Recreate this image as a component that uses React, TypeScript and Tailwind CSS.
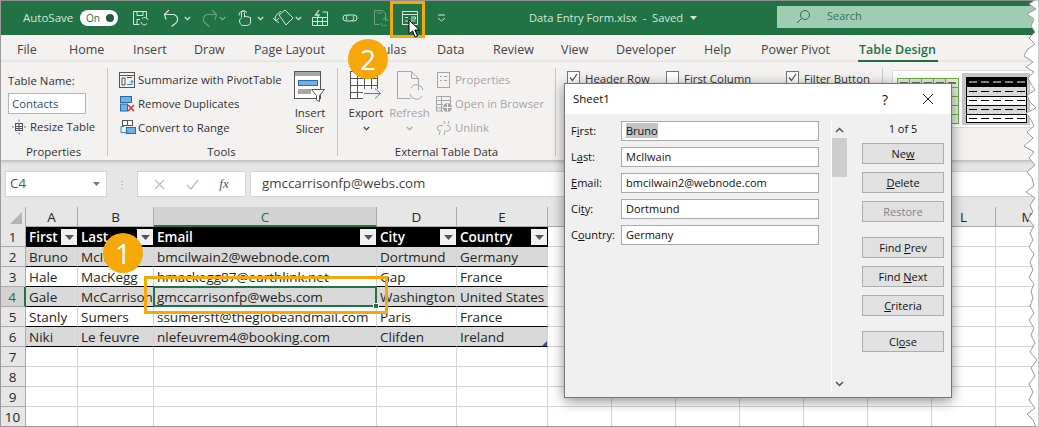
import React from 'react';

const font = { fontFamily: '"Open Sans", "Noto Sans", sans-serif' };

const tabs: [string, number][] = [
  ['File', 69], ['Home', 64], ['Insert', 61], ['Draw', 60], ['Page Layout', 98], ['Formulas', 85],
  ['Data', 56], ['Review', 68], ['View', 55], ['Developer', 88], ['Help', 57], ['Power Pivot', 98],
];

const columns = [
  { name: 'A', width: 52 },
  { name: 'B', width: 76 },
  { name: 'C', width: 223 },
  { name: 'D', width: 80 },
  { name: 'E', width: 91 },
  { name: 'F', width: 64 },
  { name: 'G', width: 64 },
  { name: 'H', width: 64 },
  { name: 'I', width: 64 },
  { name: 'J', width: 64 },
  { name: 'K', width: 64 },
  { name: 'L', width: 64 },
  { name: 'M', width: 64 },
];

const tableRows = [
  ['First', 'Last', 'Email', 'City', 'Country'],
  ['Bruno', 'McIlwain', 'bmcilwain2@webnode.com', 'Dortmund', 'Germany'],
  ['Hale', 'MacKegg', 'hmackegg87@earthlink.net', 'Gap', 'France'],
  ['Gale', 'McCarrison', 'gmccarrisonfp@webs.com', 'Washington', 'United States'],
  ['Stanly', 'Sumers', 'ssumersft@theglobeandmail.com', 'Paris', 'France'],
  ['Niki', 'Le feuvre', 'nlefeuvrem4@booking.com', 'Clifden', 'Ireland'],
];

const fields = [
  { pre: 'F', key: 'i', post: 'rst:', value: 'Bruno' },
  { pre: 'L', key: 'a', post: 'st:', value: 'McIlwain' },
  { pre: '', key: 'E', post: 'mail:', value: 'bmcilwain2@webnode.com' },
  { pre: 'Ci', key: 't', post: 'y:', value: 'Dortmund' },
  { pre: 'C', key: 'o', post: 'untry:', value: 'Germany' },
];

// hand-picked tear along the right edge of the screenshot
const tearPoints = [
  [14, 0], [8, 4], [15, 9], [6, 14], [13, 19], [10, 26], [14, 32], [8, 38], [14, 44], [6, 50], [3, 56], [12, 62],
  [5, 67], [13, 72], [7, 78], [10, 84], [14, 90], [6, 95], [9, 102], [15, 108], [5, 113], [10, 120], [13, 126],
  [6, 132], [12, 138], [3, 146], [13, 152], [8, 158], [14, 165], [6, 172], [11, 178], [13, 186], [5, 192], [14, 198],
  [9, 205], [12, 212], [7, 219], [13, 226], [9, 233], [12, 240], [8, 247], [13, 254], [9, 262], [12, 270], [8, 277],
  [13, 284], [10, 291], [12, 298], [9, 306], [13, 313], [8, 320], [13, 328], [10, 335], [14, 343], [9, 352], [16, 360],
  [10, 368], [14, 376], [8, 384], [12, 392], [8, 400], [14, 408], [6, 414], [12, 420], [15, 427],
];

function Chevron({ className = '', color = '#fff' }: { className?: string; color?: string }) {
  return (
    <svg width="7" height="5" viewBox="0 0 7 5" fill="none" className={className}>
      <path d="M.8 1 3.5 3.7 6.2 1" stroke={color} strokeWidth="1.1" />
    </svg>
  );
}

function QatIcon({ children, className = '' }: { children: React.ReactNode; className?: string }) {
  return (
    <svg width="18" height="18" viewBox="0 0 18 18" fill="none" stroke="#d6e6dc" strokeWidth="1" className={`shrink-0 ${className}`}>
      {children}
    </svg>
  );
}

function FilterButton({ className = '' }: { className?: string }) {
  return (
    <span className={`w-4 h-4 bg-[#f0f0f0] flex items-center justify-center shrink-0 ${className}`}>
      <svg width="9" height="5" viewBox="0 0 9 5"><path d="M0 0h9L4.5 5z" fill="#555" /></svg>
    </span>
  );
}

function SmallAction({ icon, label, muted }: { icon: React.ReactNode; label: string; muted?: boolean }) {
  return (
    <div className={`h-6 flex items-center gap-[2px] whitespace-nowrap ${muted ? 'text-[#a6a6a6]' : 'text-[#333]'}`}>
      <span className="w-[18px] flex justify-center">{icon}</span>
      <span>{label}</span>
    </div>
  );
}

function CheckOption({ label, checked, width }: { label: string; checked?: boolean; width: number }) {
  return (
    <div className="flex items-start gap-[5px] h-[16px]" style={{ width }}>
      <span className="w-[13px] h-[13px] mt-[3px] border border-[#777] bg-white flex items-center justify-center shrink-0">
        {checked && (
          <svg width="11" height="11" viewBox="0 0 11 11" fill="none"><path d="m2 5.500 2.500 3L9 2" stroke="#555" strokeWidth="1.200" /></svg>
        )}
      </span>
      <span className="leading-[16px] pt-[3px] whitespace-nowrap">{label}</span>
    </div>
  );
}

function Ribbon() {
  return (
    <div className="h-[98px] flex text-[11.4px] text-[#333] bg-[#f3f2f1] shadow-[0_1px_4px_rgba(0,0,0,0.25)] relative">
      {/* Properties */}
      <div className="w-[108px] shrink-0 pl-2 pt-[3px] flex flex-col border-r border-[#c6c6c6] my-[6px] h-[88px]">
        <div className="h-[20px] leading-[20px]">Table Name:</div>
        <div className="w-[78px] h-[21px] mt-[2px] border border-[#b5b5b5] bg-white pl-[3px] leading-[19px] text-[#1f4e79]">Contacts</div>
        <div className="h-6 mt-[1px] flex items-center gap-[3px] pl-[3px]">
          <svg width="16" height="18" viewBox="0 0 16 18" fill="none" stroke="#555">
            <rect x="4.5" y="5.5" width="7" height="7" />
            <path d="M4.5 8.5h7M4.5 10.5h7M8 5.5v7" />
            <path d="M8 1.5v2M8 14.500v2M1 9h2M13 9h2" stroke="#2b88d8" />
          </svg>
          <span>Resize Table</span>
        </div>
        <div className="mt-auto mb-[-4px] pr-[8px] text-center leading-[16px]">Properties</div>
      </div>

      {/* Tools */}
      <div className="w-[230px] shrink-0 my-[6px] h-[88px] border-r border-[#c6c6c6] flex flex-col">
        <div className="flex flex-1">
          <div className="pl-[10px] w-[185px] shrink-0">
            <SmallAction
              label="Summarize with PivotTable"
              icon={
                <svg width="16" height="16" viewBox="0 0 16 16" fill="none" stroke="#555">
                  <rect x=".5" y=".5" width="15" height="15" />
                  <path d="M1 3.500h14" />
                  <path d="M3 6h3v7H3zM8 5.500h5" />
                  <path d="M8 12.500h5v-4M11 10.500l2-2 2 2" stroke="#2b88d8" />
                </svg>
              }
            />
            <SmallAction
              label="Remove Duplicates"
              icon={
                <svg width="16" height="16" viewBox="0 0 16 16" fill="none">
                  <rect x="1.500" y=".5" width="11" height="6" fill="#6fb1e6" stroke="#2b6ca8" />
                  <rect x="1.500" y="8" width="7" height="7" fill="#6fb1e6" stroke="#2b6ca8" />
                  <path d="m9 9 6 6M15 9l-6 6" stroke="#d13438" strokeWidth="1.500" />
                </svg>
              }
            />
            <SmallAction
              label="Convert to Range"
              icon={
                <svg width="17" height="16" viewBox="0 0 17 16" fill="none">
                  <rect x="3.500" y=".5" width="5" height="5" fill="#fff" stroke="#555" />
                  <rect x="8.500" y=".5" width="5" height="5" fill="#fff" stroke="#555" />
                  <rect x="7.500" y="7.500" width="9" height="6" fill="#6fb1e6" stroke="#2b6ca8" />
                  <path d="M5 6.500H2v6h7M7 10.500l2 2-2 2" stroke="#2b88d8" />
                </svg>
              }
            />
          </div>
          <div className="flex flex-col items-center w-[34px] leading-[16px]">
            <svg width="32" height="32" viewBox="0 0 32 32" fill="none" className="mt-[3px]">
              <rect x=".5" y=".5" width="26" height="27" fill="#fff" stroke="#555" />
              <rect x="1" y="1" width="25" height="4" fill="#a6a6a6" />
              <rect x="4.500" y="9.500" width="19" height="5" fill="#6fb1e6" stroke="#2b6ca8" />
              <rect x="4" y="18" width="13" height="5" fill="#a6a6a6" />
              <path d="M17.500 18.500h13l-5 6v6l-3-1.500v-4.500z" fill="#fff" stroke="#555" />
            </svg>
            <div className="mt-[2px] text-center">Insert<br />Slicer</div>
          </div>
        </div>
        <div className="mb-[-4px] text-center leading-[16px] pr-[2px]">Tools</div>
      </div>

      {/* External Table Data */}
      <div className="w-[218px] shrink-0 my-[6px] h-[88px] border-r border-[#c6c6c6] flex flex-col">
        <div className="flex flex-1">
          <div className="w-[46px] ml-[5px] flex flex-col items-center leading-[16px]">
            <svg width="32" height="30" viewBox="0 0 32 30" fill="none" className="mt-[3px]">
              <rect x=".5" y=".5" width="27" height="27" fill="#fff" stroke="#555" />
              <path d="M1 7.500h26M1 14.500h26M1 21.500h26M7.500 1v26M14.500 1v26M21.500 1v26" stroke="#555" />
              <rect x="13" y="18" width="19" height="10" fill="#f3f2f1" />
              <path d="M14 22.500h16M25 17.500l5.500 5-5.500 5" stroke="#2b88d8" />
            </svg>
            <div className="mt-[4px]">Export</div>
            <Chevron color="#444" className="mt-[5px]" />
          </div>
          <div className="w-[41px] flex flex-col items-center leading-[16px] text-[#a6a6a6]">
            <svg width="30" height="32" viewBox="0 0 30 32" fill="none" stroke="#a6a6a6" className="mt-[2px]">
              <path d="M2.500 1.500h14l7 7v12M2.500 1.500v27h13M16.500 1.500v7h7" />
              <path d="M28 20a6.500 6.500 0 0 0-12-2M15 24a6.500 6.500 0 0 0 12 2" stroke="#a6a6a6" />
            </svg>
            <div className="mt-[3px]">Refresh</div>
            <Chevron color="#a6a6a6" className="mt-[5px]" />
          </div>
          <div className="ml-[5px]">
            <SmallAction
              muted
              label="Properties"
              icon={
                <svg width="14" height="16" viewBox="0 0 14 16" fill="none" stroke="#a6a6a6">
                  <rect x=".5" y=".5" width="12" height="15" />
                  <path d="M3 4.500h2M7 4.500h3M3 8.500h2M7 8.500h3" />
                </svg>
              }
            />
            <SmallAction
              muted
              label="Open in Browser"
              icon={
                <svg width="16" height="16" viewBox="0 0 16 16" fill="none" stroke="#a6a6a6">
                  <path d="M7 15H.5V.5h14V8M1 4.500h13M1 8.500h6M1 12h6M5.500 1v14" />
                  <circle cx="11.500" cy="11.500" r="4" fill="#a6a6a6" />
                  <path d="M7.500 11.500h8M11.500 7.500v8" stroke="#f3f2f1" />
                </svg>
              }
            />
            <SmallAction
              muted
              label="Unlink"
              icon={
                <svg width="17" height="16" viewBox="0 0 17 16" fill="none" stroke="#a6a6a6">
                  <path d="M7 5.500H3.500a2.800 2.800 0 0 0 0 5.500H5M8 11h4a2.800 2.800 0 0 0 0-5.500h-1" />
                  <path d="M8 1l1 3M13 1l-1 3M4 12l-1 3M9 12l-1 3" />
                </svg>
              }
            />
          </div>
        </div>
        <div className="mb-[-4px] text-center leading-[16px]">External Table Data</div>
      </div>

      {/* Table Style Options, mostly behind the dialog */}
      <div className="flex-1 min-w-0 flex items-start">
        <div className="w-[327px] shrink-0 h-[88px] my-[6px] border-r border-[#c6c6c6] pl-[11px] flex">
          <CheckOption checked label="Header Row" width={99} />
          <CheckOption label="First Column" width={120} />
          <CheckOption checked label="Filter Button" width={90} />
        </div>
        <div className="ml-[9px] mt-[8px] flex-1 h-[58px] bg-white border border-[#dcdcdc]">
          <svg width="140" height="56" viewBox="0 0 140 56" fill="none">
            <rect x="4.500" y="7.500" width="61" height="45" fill="#e2efda" stroke="#70ad47" />
            <path d="M4 16.500h62M4 25.500h62M4 34.500h62M4 43.500h62M16.500 7v46M28.500 7v46M40.500 7v46M52.500 7v46" stroke="#70ad47" />
            <path d="M7 12h8M19 12h8M31 12h8M43 12h8M55 12h8" stroke="#000" strokeWidth="1.200" />
            <rect x="69" y="2" width="68" height="52" fill="#c6c6c6" />
            <rect x="73.500" y="6.500" width="60" height="45" fill="#fff" stroke="#000" />
            <rect x="73" y="6" width="61" height="10" fill="#000" />
            <rect x="74" y="16" width="59" height="9" fill="#d9d9d9" />
            <rect x="74" y="34" width="59" height="9" fill="#d9d9d9" />
            <path d="M73 25.500h61M73 34.500h61M73 43.500h61" stroke="#000" />
            <path d="M76 11h8M88 11h8M100 11h8M112 11h8M124 11h8" stroke="#fff" strokeWidth="1.200" />
            <path d="M76 20.500h8M88 20.500h8M100 20.500h8M112 20.500h8M124 20.500h8M76 29.500h8M88 29.500h8M100 29.500h8M112 29.500h8M124 29.500h8M76 38.500h8M88 38.500h8M100 38.500h8M112 38.500h8M124 38.500h8M76 47.500h8M88 47.500h8M100 47.500h8M112 47.500h8M124 47.500h8" stroke="#000" />
          </svg>
        </div>
      </div>
    </div>
  );
}

function Grid() {
  return (
    <div className="text-[13.5px] text-[#262626]">
      {/* column headers */}
      <div className="flex h-5 bg-[#e6e6e6]">
        <div className="w-[26px] shrink-0 border-r border-[#ababab] relative">
          <svg width="14" height="14" viewBox="0 0 14 14" className="absolute right-[2px] bottom-[2px]"><path d="M13 1v12H1z" fill="#b4b4b4" /></svg>
        </div>
        {columns.map((c) => (
          <div
            key={c.name}
            className={`shrink-0 border-r border-[#ababab] text-center leading-[20px] ${c.name === 'C' ? 'bg-[#d2d2d2] text-[#217346] border-b-2 border-b-[#217346]' : 'border-b border-b-[#ababab]'}`}
            style={{ width: c.width }}
          >
            {c.name}
          </div>
        ))}
      </div>
      {/* rows */}
      {Array.from({ length: 10 }).map((_, r) => {
        const data = tableRows[r];
        const stripe = r === 0 ? 'bg-black text-white font-semibold' : r % 2 === 1 ? 'bg-[#d9d9d9]' : 'bg-white';
        return (
          <div key={r} className="flex h-5">
            <div
              className={`w-[26px] shrink-0 text-center leading-[20px] border-b border-[#ababab] ${r === 3 ? 'bg-[#d2d2d2] text-[#217346] border-r-2 border-r-[#217346]' : 'bg-[#e6e6e6] border-r border-r-[#ababab]'}`}
            >
              {r + 1}
            </div>
            {columns.map((c, i) => {
              const inTable = data && i < 5;
              return (
                <div
                  key={i}
                  className={`shrink-0 relative whitespace-nowrap leading-[20px] pl-[3px] ${inTable ? `${stripe} border-b border-b-black ${r === 0 ? '' : 'border-r border-r-[#d4d4d4]'}` : 'border-r border-b border-[#d4d4d4]'}`}
                  style={{ width: c.width }}
                >
                  {inTable && <span className="relative z-10">{data[i]}</span>}
                  {inTable && r === 0 && <FilterButton className="absolute right-[1px] top-[2px] z-10" />}
                  {r === 3 && i === 2 && (
                    <>
                      <div className="absolute inset-[-1px] border-2 border-[#217346] z-20" />
                      <div className="absolute right-[-3px] bottom-[-3px] w-[6px] h-[6px] bg-[#217346] border border-white z-30" />
                    </>
                  )}
                  {r === 5 && i === 4 && (
                    <svg width="5" height="5" viewBox="0 0 5 5" className="absolute right-0 bottom-0"><path d="M5 0v5H0z" fill="#2f4fa8" /></svg>
                  )}
                </div>
              );
            })}
          </div>
        );
      })}
    </div>
  );
}

function DialogButton({ pre, keyChar, post, disabled, className = '' }: { pre: string; keyChar: string; post: string; disabled?: boolean; className?: string }) {
  return (
    <div
      className={`w-[82px] h-[21px] border border-[#adadad] bg-[#e1e1e1] text-center leading-[19px] ${disabled ? 'text-[#838383]' : 'text-[#111]'} ${className}`}
    >
      {pre}
      {disabled ? keyChar : <span className="underline">{keyChar}</span>}
      {post}
    </div>
  );
}

function Dialog() {
  return (
    <div
      className="absolute left-[564px] top-[83px] w-[388px] h-[315px] bg-[#f0f0f0] border border-[#777] shadow-[0_3px_12px_rgba(0,0,0,0.45)] flex flex-col text-[11px] text-[#111] z-40"
    >
      <div className="h-[30px] bg-white flex items-center shrink-0 pl-2 text-[11.5px]">
        <span>Sheet1</span>
        <span className="ml-auto text-[14px]">?</span>
        <svg width="12" height="12" viewBox="0 0 12 12" fill="none" className="ml-[34px] mr-[17px]">
          <path d="m1 1 10 10M11 1 1 11" stroke="#222" />
        </svg>
      </div>
      <div className="flex flex-1 min-h-0 pt-[7px] pb-[5px]">
        <div className="w-[266px] shrink-0 pl-[6px] flex flex-col gap-[6px]">
          {fields.map((f) => (
            <div key={f.value} className="flex items-center h-5">
              <span className="w-[50px] shrink-0 whitespace-nowrap">
                {f.pre}<span className="underline">{f.key}</span>{f.post}
              </span>
              <div className="w-[198px] h-5 bg-white border border-[#a9a9a9] pl-1 leading-[18px]">
                {f.value === 'Bruno' ? <span className="bg-[#c4c4c4]">{f.value}</span> : f.value}
              </div>
            </div>
          ))}
        </div>
        {/* scrollbar */}
        <div className="w-[16px] shrink-0 border-l border-white flex flex-col items-center">
          <div className="h-[17px] flex items-center justify-center">
            <svg width="9" height="6" viewBox="0 0 9 6" fill="none"><path d="m1 5 3.500-3.500L8 5" stroke="#555" strokeWidth="1.500" /></svg>
          </div>
          <div className="w-[15px] h-[39px] bg-[#cdcdcd]" />
          <div className="mt-auto h-[17px] flex items-center justify-center">
            <svg width="9" height="6" viewBox="0 0 9 6" fill="none"><path d="m1 1 3.500 3.500L8 1" stroke="#555" strokeWidth="1.500" /></svg>
          </div>
        </div>
        <div className="ml-[15px] flex flex-col">
          <div className="h-[22px] text-center leading-[16px]">1 of 5</div>
          <DialogButton pre="Ne" keyChar="w" post="" />
          <DialogButton pre="" keyChar="D" post="elete" className="mt-2" />
          <DialogButton pre="" keyChar="R" post="estore" disabled className="mt-2" />
          <DialogButton pre="Find " keyChar="P" post="rev" className="mt-[15px]" />
          <DialogButton pre="Find " keyChar="N" post="ext" className="mt-2" />
          <DialogButton pre="" keyChar="C" post="riteria" className="mt-2" />
          <DialogButton pre="Cl" keyChar="o" post="se" className="mt-[15px]" />
        </div>
      </div>
    </div>
  );
}

export default function App() {
  return (
    <div className="w-[1039px] h-[427px] relative overflow-hidden bg-white" style={font}>
      {/* Title bar */}
      <div className="h-[34px] mt-[1px] bg-[#217346] flex items-center text-[#d3e5da] text-[11px] whitespace-nowrap">
        <span className="ml-[23px] w-[50px] text-[11.5px]">AutoSave</span>
        <div className="ml-[7px] w-[38px] h-[16px] rounded-full bg-white flex items-center justify-between pl-[6px] pr-[4px] text-[10px] text-[#217346]">
          <span>On</span>
          <span className="w-[8px] h-[8px] rounded-full bg-[#20603d]" />
        </div>
        <QatIcon className="ml-[14px]">
          <path d="M1.500 15.500v-13h13v6M1.500 15.500h6M5 2.500v4h6v-4M5 15.500v-5h3" />
          <path d="M16 11a3.300 3.300 0 0 0-6-1M9 13a3.300 3.300 0 0 0 6 1.500" />
        </QatIcon>
        <QatIcon className="ml-[13px]">
          <path d="M1.500 5.500h9.500a5 5 0 0 1 2 8.500L8.500 17.500" strokeWidth="1.200" />
          <path d="M6 1 1.500 5.500l1.500 5" strokeWidth="1.200" />
        </QatIcon>
        <Chevron color="#d3e5da" className="ml-[3px]" />
        <QatIcon className="ml-[9px] opacity-40">
          <path d="M16.500 5.500H7a5 5 0 0 0-2 8.500l4.500 3.500" strokeWidth="1.200" />
          <path d="M12 1l4.500 4.500-1.500 5" strokeWidth="1.200" />
        </QatIcon>
        <Chevron color="#7fb197" className="ml-[1px]" />
        <QatIcon className="ml-[10px]">
          <path d="M5.500 8.500v-5a1.500 1.500 0 0 1 3 0v5" />
          <path d="M5.500 9 3.500 11c0 3 1 5.500 4 5.500h3c2 0 4-1 4-3.500V8.500L8.500 7" />
          <path d="M3 6.500a4.500 4.500 0 0 1 8-3" />
        </QatIcon>
        <Chevron color="#d3e5da" className="ml-[3px]" />
        <svg width="22" height="18" viewBox="0 0 22 18" fill="none" stroke="#d6e6dc" className="ml-[8px] shrink-0">
          <path d="m7 6 6-5 8 8-7 7z" />
          <path d="M9 2 4 6.500a4 4 0 0 0 0 5L7 14" />
          <path d="m1 9 3 3 3-3" />
        </svg>
        <Chevron color="#d3e5da" className="ml-[1px]" />
        <QatIcon className="ml-[9px]">
          <path d="M1.500 8.500h15v8h-15zM1.500 12.500h15M6.500 8.500v8M11.500 8.500v8M11.500 3h5v5.500" />
          <path d="M8 1 4.500 6H8L6.500 8.500" strokeWidth="1.300" />
        </QatIcon>
        <QatIcon className="ml-[12px]">
          <path d="M7 6H5a3 3 0 0 0 0 6h5a3 3 0 0 0 2-5" />
          <path d="M11 12h2a3 3 0 0 0 0-6H8a3 3 0 0 0-2 5" />
        </QatIcon>
        <QatIcon className="ml-[13px] opacity-40">
          <path d="M2.500 1.500h8l3 3v8M2.500 1.500v14h5M5 4h5" />
          <path d="M16 12a3.300 3.300 0 0 0-6-1M9 14a3.300 3.300 0 0 0 6 1.500" />
        </QatIcon>
        <QatIcon className="ml-[11px]">
          <rect x="1.500" y="2.500" width="15" height="13" />
          <path d="M1.500 5.500h15M4 8.500h3M10 8h4.500v2H10M4 12h3M10 12h4.500" />
        </QatIcon>
        <svg width="9" height="8" viewBox="0 0 9 8" fill="none" className="ml-[18px]">
          <path d="M1 1h7M1 4l3.500 3L8 4" stroke="#d3e5da" />
        </svg>
        <span className="ml-[83px] text-[11.2px]">Data Entry Form.xlsx&nbsp; -&nbsp; Saved</span>
        <svg width="7" height="4" viewBox="0 0 7 4" className="ml-[7px]"><path d="M0 0h7L3.500 4z" fill="#d3e5da" /></svg>
        <div className="ml-auto w-[262px] h-[22px] bg-[#9fcdb3] flex items-center pl-[19px] text-[#3c7256] mb-[3px]">
          <svg width="15" height="15" viewBox="0 0 15 15" fill="none" stroke="#2f6b4c">
            <circle cx="9" cy="6" r="4.500" />
            <path d="M5.500 9.500 1 14" />
          </svg>
          <span className="ml-[16px]">Search</span>
        </div>
      </div>

      {/* Tabs */}
      <div className="h-[27px] bg-[#f3f2f1] flex items-end pb-[3px] text-[12.5px] text-[#444] whitespace-nowrap">
        {tabs.map(([label, width], i) => (
          <span key={label} className={`shrink-0 leading-[18px] ${i === 0 ? 'pl-[17px]' : ''}`} style={{ width }}>
            {label}
          </span>
        ))}
        <span className="relative font-semibold text-[#217346] leading-[18px]">
          Table Design
          <span className="absolute left-[-1px] right-[-2px] bottom-[-3px] h-[2px] bg-[#217346]" />
        </span>
      </div>

      <Ribbon />

      {/* Formula bar */}
      <div className="h-[47px] bg-[#e6e6e6] pt-[11px] flex items-start text-[13.300px] text-[#444]">
        <div className="ml-[5px] w-[102px] h-[26px] bg-white border border-[#d4d4d4] flex items-center pl-1 pr-[6px] text-[#555]">
          <span>C4</span>
          <svg width="7" height="4" viewBox="0 0 7 4" className="ml-auto"><path d="M0 0h7L3.500 4z" fill="#777" /></svg>
        </div>
        <div className="w-[30px] h-[26px] flex items-center justify-center text-[#999] text-[10px] leading-none">⋮</div>
        <div className="w-[109px] h-[26px] bg-white border border-[#d4d4d4] flex items-center justify-around px-[6px]">
          <svg width="11" height="11" viewBox="0 0 11 11" fill="none"><path d="m1 1 9 9M10 1l-9 9" stroke="#bdbdbd" strokeWidth="1.300" /></svg>
          <svg width="13" height="11" viewBox="0 0 13 11" fill="none"><path d="m1 6 4 4 7-9" stroke="#bdbdbd" strokeWidth="1.300" /></svg>
          <span className="italic text-[#555] text-[13px]" style={{ fontFamily: '"Liberation Serif", serif' }}>fx</span>
        </div>
        <div className="ml-1 flex-1 h-[26px] bg-white border border-[#d4d4d4] flex items-center pl-[11px]">gmccarrisonfp@webs.com</div>
      </div>

      <Grid />

      <Dialog />

      {/* Callouts */}
      <div className="absolute left-[144px] top-[276px] w-[244px] h-[38px] border-[3px] border-[#f6a70a] z-30" />
      <div className="absolute left-[390px] top-[1px] w-[35px] h-[37px] border-[3px] border-[#f6a70a] z-30" />
      <div className="absolute left-[103px] top-[233px] w-10 h-10 rounded-full bg-[#f6a70a] text-white text-[28px] flex items-center justify-center z-30">1</div>
      <div className="absolute left-[348px] top-[39px] w-10 h-10 rounded-full bg-[#f6a70a] text-white text-[28px] flex items-center justify-center z-30">2</div>
      <svg width="13" height="20" viewBox="0 0 13 20" className="absolute left-[408px] top-[19px] z-30">
        <path d="M1 1v14l3.500-3 2.500 6 2.500-1-2.500-6H11.500z" fill="#fff" stroke="#000" />
      </svg>

      {/* Screenshot edge lines */}
      <div className="absolute left-0 top-0 w-full h-px bg-[#8f8f8f] z-50" />
      <div className="absolute left-0 top-0 w-px h-full bg-[#9a9a9a] z-50" />
      <div className="absolute left-0 bottom-0 w-full h-px bg-[#9a9a9a] z-50" />

      {/* Torn right edge */}
      <svg width="18" height="427" viewBox="0 0 18 427" className="absolute right-0 top-0 z-50">
        <polygon points={`${tearPoints.map((p) => p.join(',')).join(' ')} 18,427 18,0`} fill="#fff" stroke="#9a9a9a" strokeWidth="1" />
      </svg>
    </div>
  );
}
